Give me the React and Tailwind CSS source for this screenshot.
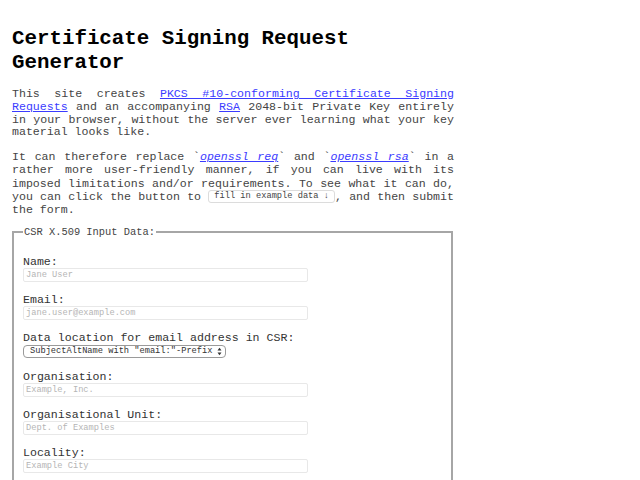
import React from 'react';

const mono = { fontFamily: '"Liberation Mono", "DejaVu Sans Mono", monospace' };

function Field({ label, placeholder }) {
  return (
    <div className="mb-[11px]">
      <label className="block text-[11.6px] leading-[13px] text-[#333]">{label}</label>
      <input
        type="text"
        placeholder={placeholder}
        className="block w-[285px] h-[14px] border border-[#e8e8e8] rounded-[2px] px-[2px] text-[8.7px] text-[#333] placeholder:text-[#b5b5b5] outline-none"
        style={mono}
      />
    </div>
  );
}

export default function App() {
  return (
    <div className="min-h-screen bg-white" style={mono}>
      <div className="w-[442px] ml-[12px] pt-[27px]">
        <h1 className="text-[20.8px] leading-[24px] font-bold text-black">
          Certificate Signing Request Generator
        </h1>

        <p className="mt-[13px] text-[11.6px] leading-[12.8px] text-[#444] text-justify">
          This site creates{' '}
          <a href="#" className="text-[#3b3bff] underline">PKCS #10-conforming Certificate Signing Requests</a>{' '}
          and an accompanying <a href="#" className="text-[#3b3bff] underline">RSA</a> 2048-bit Private Key
          entirely in your browser, without the server ever learning what your key material looks like.
        </p>

        <p className="mt-[11px] text-[11.6px] leading-[13.2px] text-[#444] text-justify">
          It can therefore replace `<a href="#" className="italic text-[#3b3bff] underline">openssl req</a>` and `
          <a href="#" className="italic text-[#3b3bff] underline">openssl rsa</a>` in a rather more
          user-friendly manner, if you can live with its imposed limitations and/or requirements. To see
          what it can do, you can click the button to{' '}
          <button
            type="button"
            className="inline-block align-middle h-[13px] px-[5px] border border-[#dcdcdc] rounded-[3px] bg-white text-[8.7px] leading-[11px] text-[#444]"
            style={mono}
          >
            fill in example data ↓
          </button>
          , and then submit the form.
        </p>

        <fieldset className="mt-[10px] border-2 border-[#a6a6a6] pl-[9px] pr-[9px] pt-[17px] pb-[4px] w-[441px]">
          <legend className="px-[1px] text-[10.4px] leading-[12px] text-[#444]">CSR X.509 Input Data:</legend>

          <Field label="Name:" placeholder="Jane User" />
          <Field label="Email:" placeholder="jane.user@example.com" />

          <div className="mb-[12px]">
            <label className="block text-[11.6px] leading-[13px] text-[#333]">
              Data location for email address in CSR:
            </label>
            <div className="mt-[1px] flex items-center h-[13px] w-[203px] border border-[#9a9a9a] rounded-[4px] pl-[6px] pr-[3px] bg-white">
              <span className="flex-1 text-[8.7px] leading-[11px] text-[#333]">
                SubjectAltName with "email:"-Prefix
              </span>
              <svg width="5" height="9" viewBox="0 0 5 9" className="shrink-0">
                <path d="M0.5 3.5 L2.5 0.8 L4.5 3.5 Z" fill="#333" />
                <path d="M0.5 5.5 L2.5 8.2 L4.5 5.5 Z" fill="#333" />
              </svg>
            </div>
          </div>

          <Field label="Organisation:" placeholder="Example, Inc." />
          <Field label="Organisational Unit:" placeholder="Dept. of Examples" />
          <Field label="Locality:" placeholder="Example City" />
          <Field label="State:" placeholder="Example State" />
        </fieldset>
      </div>
    </div>
  );
}
